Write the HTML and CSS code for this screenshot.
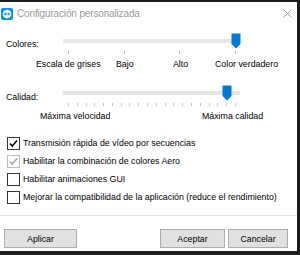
FILE: index.html
```html
<!DOCTYPE html>
<html lang="es">
<head>
  <meta charset="UTF-8" />
  <title>Configuración personalizada</title>
  <link rel="stylesheet" href="styles.css">
</head>
<body>

  <div class="window">

    <div class="titlebar">
      <svg class="logo" width="12" height="12" viewBox="0 0 12 12">
        <rect x="0" y="0" width="12" height="12" rx="2" fill="#0e8ee9"/>
        <circle cx="6" cy="6" r="4.3" fill="#fff"/>
        <path d="M2.4 6 L4.6 4.3 V5.4 H7.4 V4.3 L9.6 6 L7.4 7.7 V6.6 H4.6 V7.7 Z" fill="#0e8ee9"/>
      </svg>
      <span class="title">Configuración personalizada</span>
      <svg class="close" width="9" height="9" viewBox="0 0 9 9">
        <path d="M0.5 0.5 L8.5 8.5 M8.5 0.5 L0.5 8.5" stroke="#a0a0a0" stroke-width="1"/>
      </svg>
    </div>

    <div class="setting setting-colors">
      <div class="setting-label">Colores:</div>
      <div class="slider">
        <div class="track"></div>
        <div class="ticks" id="colorTicks"></div>
        <svg class="thumb" style="left: 168px" width="10" height="16" viewBox="0 0 10 16">
          <path d="M0.5 1.5 Q0.5 0.5 1.5 0.5 H8.5 Q9.5 0.5 9.5 1.5 V11 L5 15.5 L0.5 11 Z" fill="#0078d7"/>
        </svg>
      </div>
    </div>
    <div class="scale-labels colors-labels">
      <span class="cl-1">Escala de grises</span>
      <span class="cl-2">Bajo</span>
      <span class="cl-3">Alto</span>
      <span>Color verdadero</span>
    </div>

    <div class="setting setting-quality">
      <div class="setting-label">Calidad:</div>
      <div class="slider">
        <div class="track"></div>
        <div class="ticks" id="qualityTicks"></div>
        <svg class="thumb" style="left: 159px" width="10" height="16" viewBox="0 0 10 16">
          <path d="M0.5 1.5 Q0.5 0.5 1.5 0.5 H8.5 Q9.5 0.5 9.5 1.5 V11 L5 15.5 L0.5 11 Z" fill="#0078d7"/>
        </svg>
      </div>
    </div>
    <div class="scale-labels quality-labels">
      <span class="ql-1">Máxima velocidad</span>
      <span>Máxima calidad</span>
    </div>

    <div class="options">
      <label class="option">
        <span class="box checked">
          <svg width="11" height="11" viewBox="0 0 11 11"><path d="M2 5.5 L4.3 8 L9 2.5" stroke="#000" stroke-width="1.6" fill="none"/></svg>
        </span>
        Transmisión rápida de vídeo por secuencias
      </label>
      <label class="option">
        <span class="box checked disabled">
          <svg width="11" height="11" viewBox="0 0 11 11"><path d="M2 5.5 L4.3 8 L9 2.5" stroke="#a8a8a8" stroke-width="1.6" fill="none"/></svg>
        </span>
        Habilitar la combinación de colores Aero
      </label>
      <label class="option">
        <span class="box"></span>
        Habilitar animaciones GUI
      </label>
      <label class="option">
        <span class="box"></span>
        Mejorar la compatibilidad de la aplicación (reduce el rendimiento)
      </label>
    </div>

    <div class="footer">
      <button class="btn btn-apply">Aplicar</button>
      <button class="btn btn-ok">Aceptar</button>
      <button class="btn btn-cancel">Cancelar</button>
    </div>

  </div>

  <script>
    function addTicks(id, count) {
      const row = document.getElementById(id);
      for (let i = 0; i < count; i++) {
        const t = document.createElement('span');
        t.className = 'tick';
        row.appendChild(t);
      }
    }

    addTicks('colorTicks', 4);
    addTicks('qualityTicks', 20);
  </script>

</body>
</html>
```

FILE: styles.css
```css
html, body {
  margin: 0;
  height: 100%;
}

body {
  background-color: #1c1c1c;
  font-family: 'Liberation Sans', Arial, sans-serif;
  font-size: 8.8px;
  color: #000;
  overflow: hidden;
}

.window {
  width: 297px;
  height: 249px;
  margin-top: 2px;
  background: #fff;
  display: flex;
  flex-direction: column;
}

/* title bar */
.titlebar {
  height: 23px;
  display: flex;
  align-items: center;
  padding-left: 1px;
  flex-shrink: 0;
}

.logo {
  margin-right: 4px;
}

.title {
  font-size: 10px;
  letter-spacing: -0.15px;
  color: #9a9a9a;
  flex: 1;
}

.close {
  margin-right: 5px;
}

/* sliders */
.setting {
  display: flex;
  padding-left: 6px;
}

.setting-colors {
  margin-top: 8px;
}

.setting-quality {
  margin-top: 14px;
}

.setting-label {
  width: 57px;
  line-height: 14px;
}

.setting-colors .setting-label {
  padding-top: 4px;
}

.setting-quality .setting-label {
  padding-top: 5px;
}

.slider {
  position: relative;
  width: 177px;
  padding-top: 6px;
}

.track {
  height: 4px;
  background: #e6e6e6;
}

.ticks {
  display: flex;
  justify-content: space-between;
  padding: 0 4px 0 5px;
  margin-top: 8px;
}

.tick {
  width: 1px;
  height: 3px;
  background: #c3c3c3;
}

.thumb {
  position: absolute;
  top: 0;
}

.scale-labels {
  display: flex;
  line-height: 14px;
  margin-top: 3px;
  white-space: nowrap;
}

.colors-labels {
  padding-left: 36px;
}

.cl-1 { width: 80px; }
.cl-2 { width: 57px; }
.cl-3 { width: 42px; }

.quality-labels {
  padding-left: 40px;
}

.ql-1 { width: 162px; }

/* checkboxes */
.options {
  margin-top: 11px;
}

.option {
  display: flex;
  align-items: center;
  height: 18px;
  padding-left: 7px;
  white-space: nowrap;
}

.box {
  width: 11px;
  height: 11px;
  border: 1px solid #333;
  margin-right: 3px;
  display: flex;
  flex-shrink: 0;
}

.box.disabled {
  border-color: #bcbcbc;
}

/* footer */
.footer {
  margin-top: 9px;
  border-top: 1px solid #e3e3e3;
  padding: 13px 9px 0 4px;
  display: flex;
}

.btn {
  height: 19px;
  padding: 0;
  background: #e1e1e1;
  border: 1px solid #adadad;
  font-family: inherit;
  font-size: 8.8px;
  color: #000;
}

.btn-apply {
  width: 73px;
  margin-right: auto;
}

.btn-ok {
  width: 65px;
  margin-right: 3px;
}

.btn-cancel {
  width: 60px;
}
```
